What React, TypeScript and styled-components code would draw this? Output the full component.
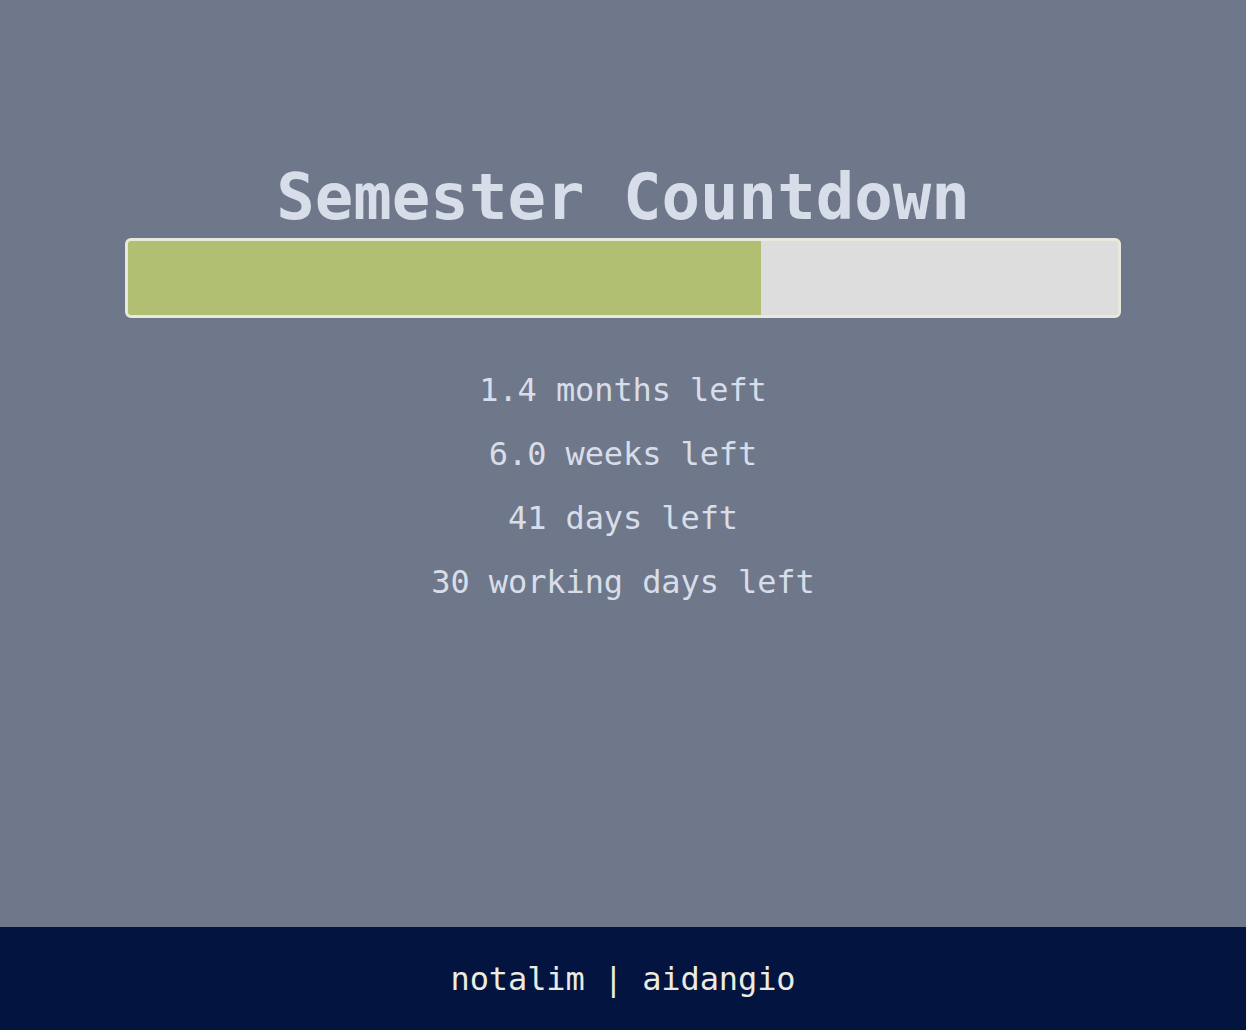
import React from "react";
import styled, { createGlobalStyle } from "styled-components";

const GlobalStyle = createGlobalStyle`
  html, body {
    margin: 0;
    padding: 0;
    background: #6f778a;
  }
  * { box-sizing: border-box; }
`;

const Page = styled.div`
  min-height: 100vh;
  display: flex;
  flex-direction: column;
  font-family: "DejaVu Sans Mono", "Liberation Mono", monospace;
  background: #6f778a;
`;

const Main = styled.main`
  flex: 1;
  display: flex;
  flex-direction: column;
  align-items: center;
  padding-top: 165px;
`;

const Title = styled.h1`
  margin: 0;
  font-size: 64px;
  line-height: 64px;
  font-weight: 700;
  color: #d8dee9;
`;

const Bar = styled.div`
  width: 80%;
  height: 80px;
  margin-top: 9px;
  border: 3px solid #e6e9dc;
  border-radius: 6px;
  background: #dddddd;
  overflow: hidden;
  display: flex;
`;

const Fill = styled.div`
  height: 100%;
  background: #b0bf72;
`;

const Stats = styled.div`
  margin-top: 40px;
  display: flex;
  flex-direction: column;
  align-items: center;
`;

const Stat = styled.p`
  margin: 0;
  font-size: 32px;
  line-height: 64px;
  color: #d8dee9;
  letter-spacing: -0.1px;
`;

const Footer = styled.footer`
  height: 103px;
  background: #02143f;
  display: flex;
  align-items: center;
  justify-content: center;
  font-size: 32px;
  color: #ecebe1;
  letter-spacing: -0.1px;
`;

export default function App() {
  const progress = 63.9;
  const stats = [
    "1.4 months left",
    "6.0 weeks left",
    "41 days left",
    "30 working days left",
  ];
  return (
    <>
      <GlobalStyle />
      <Page>
        <Main>
          <Title>Semester Countdown</Title>
          <Bar>
            <Fill style={{ width: `${progress}%` }} />
          </Bar>
          <Stats>
            {stats.map((s) => (
              <Stat key={s}>{s}</Stat>
            ))}
          </Stats>
        </Main>
        <Footer>notalim | aidangio</Footer>
      </Page>
    </>
  );
}
